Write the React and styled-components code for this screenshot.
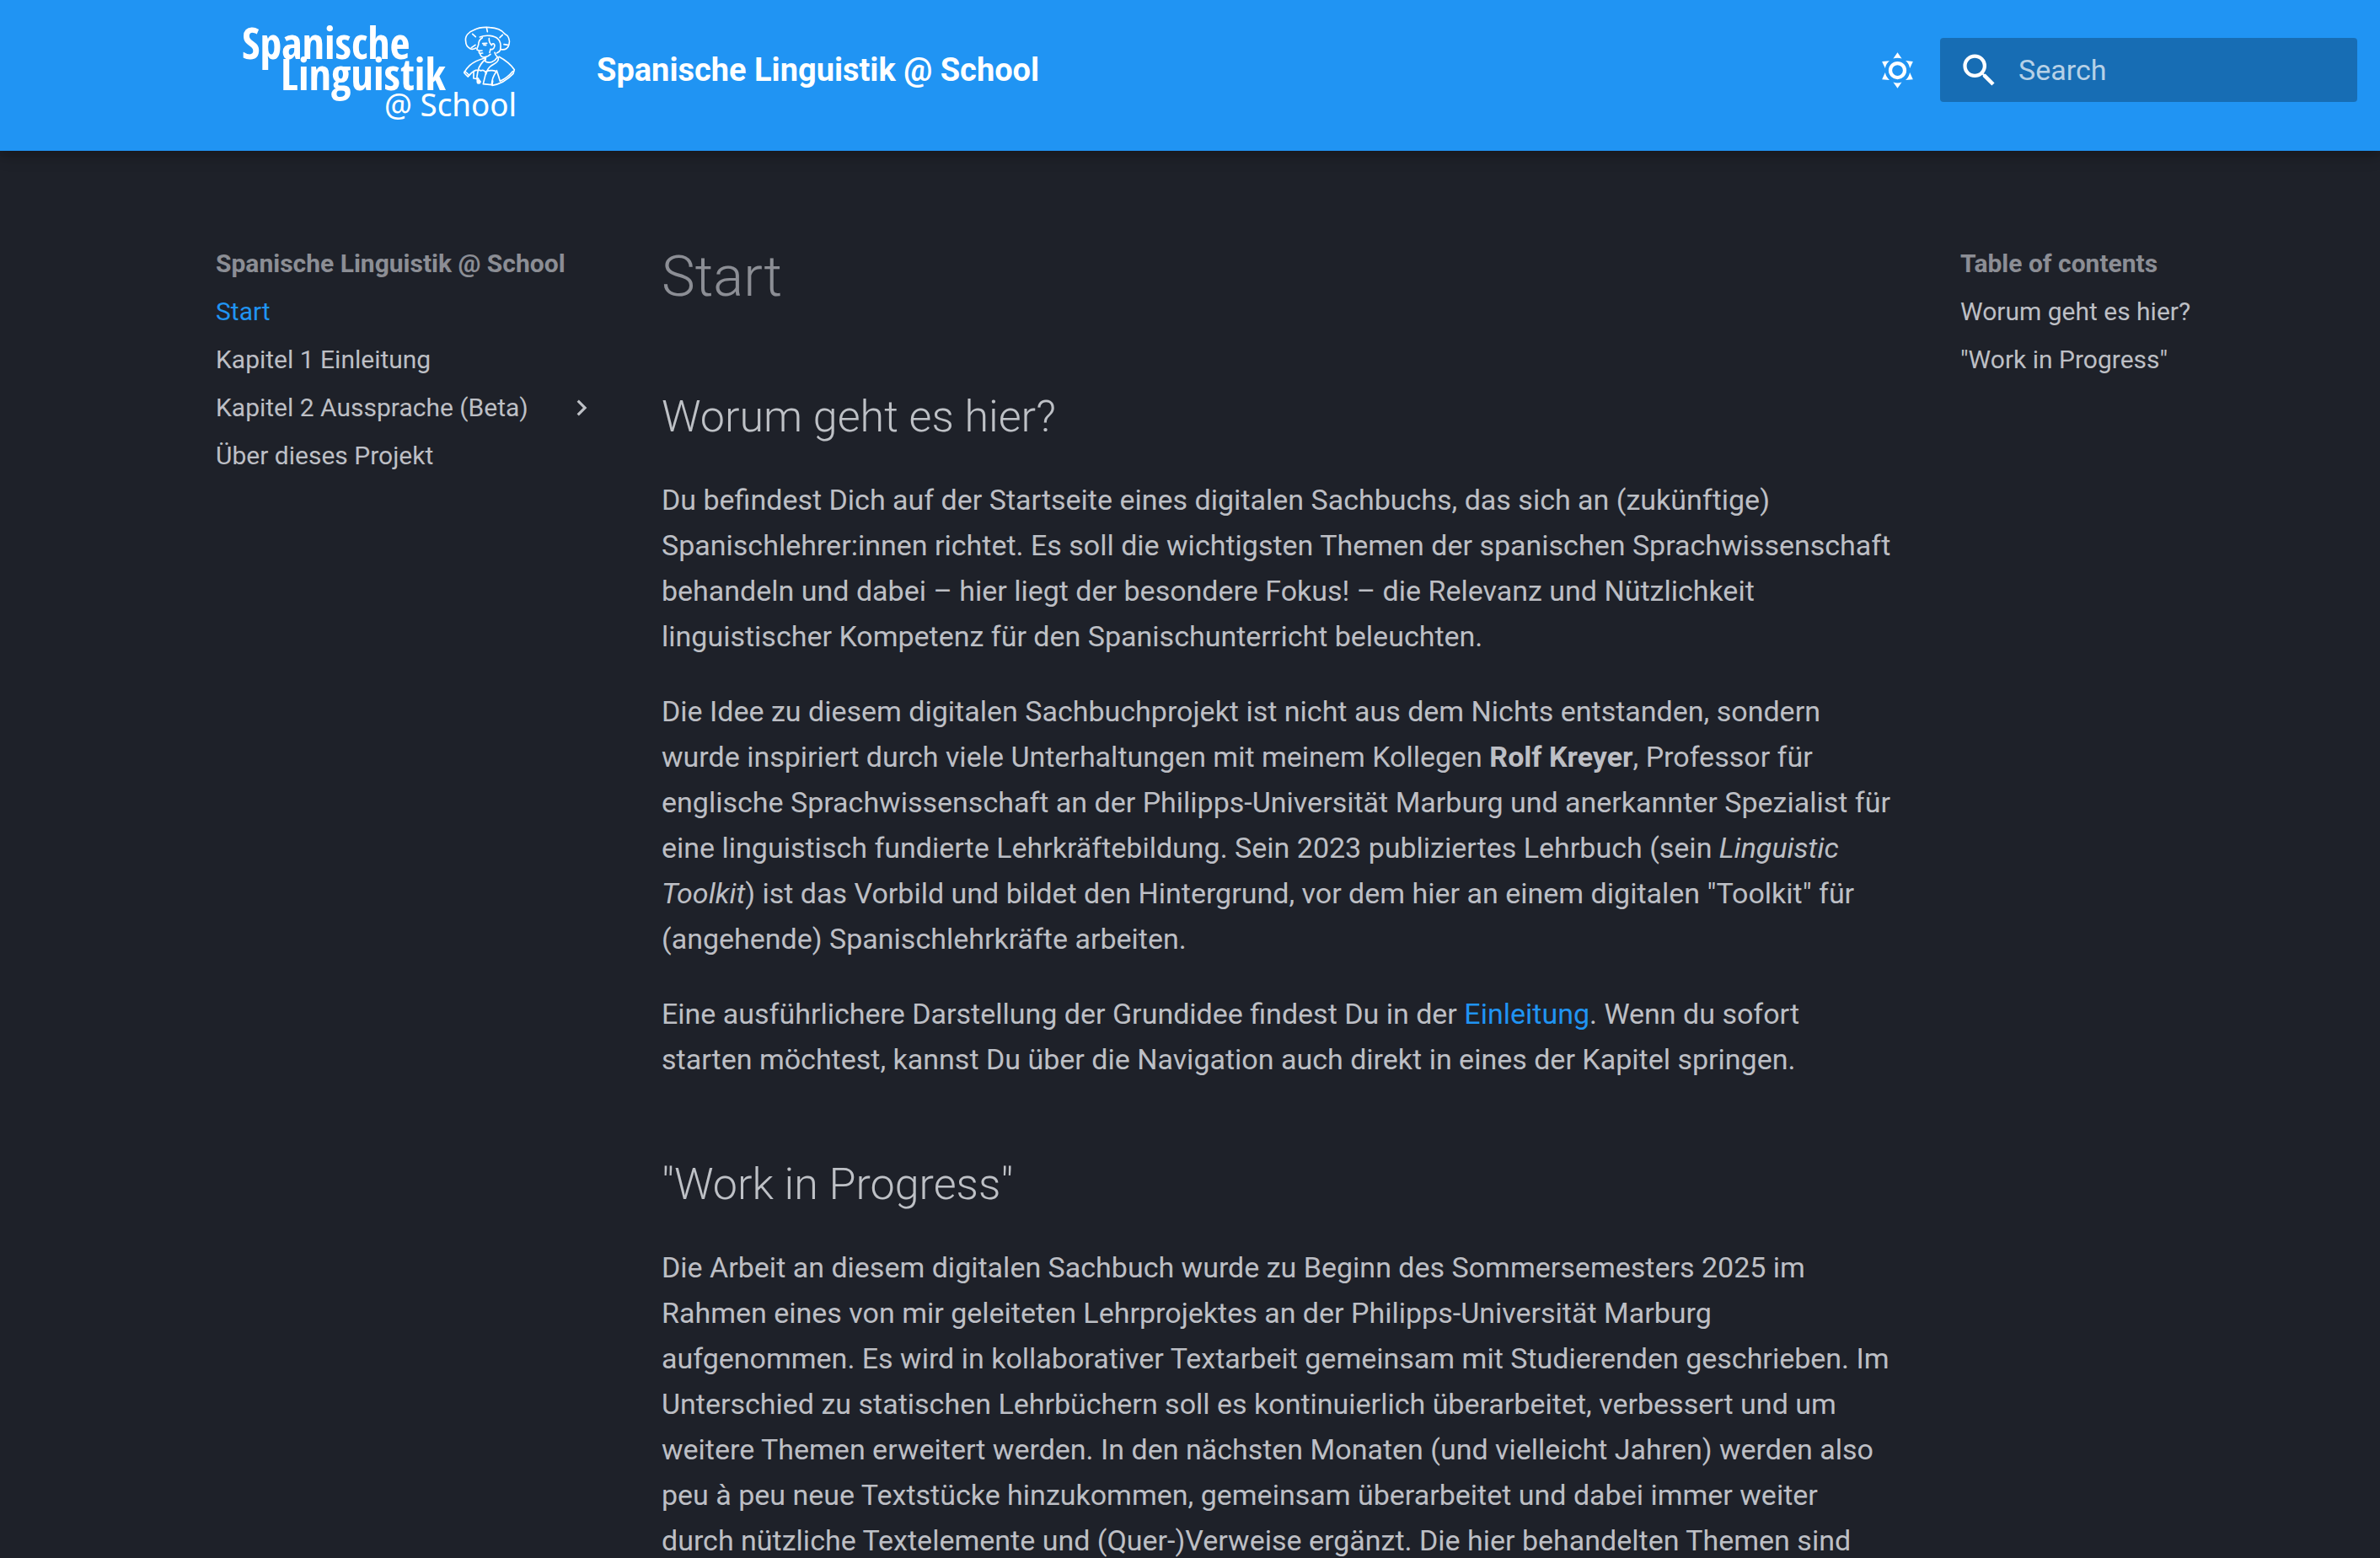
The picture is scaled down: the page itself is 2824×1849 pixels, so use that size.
import React from "react";
import styled, { createGlobalStyle } from "styled-components";

const color = {
  primary: "#2094f3",
  page: "#1e2129",
  text: "rgba(226, 228, 233, 0.82)",
  muted: "rgba(226, 228, 233, 0.56)",
};

const GlobalStyle = createGlobalStyle`
  *, *::before, *::after { box-sizing: border-box; }
  body {
    margin: 0;
    background: ${color.page};
    color: ${color.text};
    font-family: Roboto, "Liberation Sans", sans-serif;
    font-size: 34px;
    -webkit-font-smoothing: antialiased;
  }
  ::-webkit-scrollbar { display: none; }
`;

const Header = styled.header`
  position: sticky;
  top: 0;
  z-index: 1;
  display: flex;
  align-items: center;
  padding: 10px 27px 23px 280px;
  background: ${color.primary};
  color: #fff;
  box-shadow: 0 0 8px rgba(0, 0, 0, 0.1), 0 8px 16px rgba(0, 0, 0, 0.2);
`;

const LogoLink = styled.a`
  display: flex;
  margin-right: 86px;
  color: inherit;
`;

const HeaderTitle = styled.span`
  flex: 1;
  font-size: 38px;
  font-weight: 700;
  line-height: 52px;
`;

const IconButton = styled.button`
  display: flex;
  padding: 8px;
  margin-right: 17px;
  border: 0;
  background: none;
  color: inherit;
  cursor: pointer;
`;

const SearchBox = styled.label`
  display: flex;
  align-items: center;
  gap: 21px;
  width: 495px;
  height: 76px;
  padding: 0 21px;
  border-radius: 4px;
  background: rgba(0, 0, 0, 0.26);
`;

const SearchInput = styled.input`
  flex: 1;
  min-width: 0;
  padding: 0;
  border: 0;
  outline: 0;
  background: none;
  color: #fff;
  font: inherit;
  &::placeholder { color: rgba(255, 255, 255, 0.7); opacity: 1; }
`;

const Glyph = styled.svg`
  flex: none;
  width: ${(p) => p.$size}px;
  height: ${(p) => p.$size}px;
  fill: currentColor;
`;

const Layout = styled.div`
  display: grid;
  grid-template-columns: 453px minmax(0, 1fr) 242px;
  column-gap: 76px;
  align-items: start;
  max-width: 2312px;
  margin: 0 auto;
  padding-top: 105px;
`;

const Nav = styled.nav`
  font-size: 30px;
  line-height: 57px;
  white-space: nowrap;
`;

const NavTitle = styled.div`
  color: ${color.muted};
  font-weight: 700;
`;

const NavList = styled.ul`
  margin: 0;
  padding: 0;
  list-style: none;
`;

const NavLink = styled.a`
  display: flex;
  align-items: center;
  justify-content: space-between;
  color: ${(p) => (p.$active ? color.primary : "inherit")};
  text-decoration: none;
`;

const Article = styled.article`
  padding-right: 6px;
  line-height: 54px;
`;

const PageTitle = styled.h1`
  margin: 0;
  color: ${color.muted};
  font-size: 67px;
  font-weight: 300;
  line-height: 89px;
`;

const SectionTitle = styled.h2`
  margin: 85px 0 34px;
  font-size: 52px;
  font-weight: 300;
  line-height: 74px;
`;

const Paragraph = styled.p`
  margin: 0 0 35px;
`;

const TextLink = styled.a`
  color: ${color.primary};
  text-decoration: none;
`;

const LogoText = styled.text`
  fill: currentColor;
  font-family: ${(p) =>
    p.$light ? '"Noto Sans Display", "Noto Sans"' : '"Open Sans Condensed", "Open Sans"'}, sans-serif;
  font-size: ${(p) => (p.$light ? 39 : 52)}px;
  font-weight: ${(p) => (p.$light ? 400 : 700)};
`;

const Portrait = styled.g`
  fill: none;
  stroke: currentColor;
  stroke-width: 5;
  stroke-linecap: round;
  stroke-linejoin: round;
`;

function Logo() {
  return (
    <svg width="342" height="146" viewBox="-6 -10 342 146" role="img" aria-label="Spanische Linguistik @ School">
      <LogoText x="1" y="50">Spanische</LogoText>
      <LogoText x="47" y="87">Linguistik</LogoText>
      <LogoText $light x="170" y="118">@ School</LogoText>
      <Portrait transform="translate(262 8) scale(0.3333)">
        <path d="M50 87 C43 91 37 93 30 89 C22 85 14 78 14 64 C10 45 24 29 42 23 C60 14 82 12 100 14 C122 15 142 23 152 36 C166 43 172 58 168 74 C166 88 154 94 140 92" />
        <path d="M88 14 L91 29 M38 37 L49 47 M145 40 L135 50 M34 86 L48 76 M150 74 L164 76" />
        <path d="M64 48 C86 39 116 42 129 55 C139 64 139 82 137 94 C134 101 129 103 124 105" />
        <path d="M73 50 C63 56 59 65 59 76 C57 83 52 90 54 93 L62 97 C60 102 62 106 65 107 C66 116 73 122 84 119 C91 118 97 114 102 109" />
        <path d="M74 71 L89 70 M78 76 L86 77 M63 97 L72 96 M66 106 L74 105" />
        <path d="M97 53 C96 65 101 72 106 77 C109 67 119 72 116 82 C114 90 107 94 102 91 M102 91 L99 103" />
        <path d="M86 119 C83 126 82 132 85 136 C99 142 116 137 127 119 M117 103 C119 114 127 118 130 123 C133 139 112 143 103 151 C93 158 89 169 86 180" />
        <path d="M82 123 C62 128 40 138 28 149 C18 158 13 166 8 175 C12 180 16 184 22 189 C29 180 38 171 50 166 L65 166" />
        <path d="M132 118 C149 127 171 142 187 164 L183 178 C163 199 139 215 108 220 L110 204" />
        <path d="M124 167 C128 178 132 190 136 205 C151 198 167 187 181 170 M10 170 C18 175 22 179 26 184" />
        <path d="M85 126 C70 139 61 150 58 167 C55 180 51 188 55 204 M42 170 C43 180 41 189 42 195 L52 196" />
        <path d="M67 168 C76 164 85 168 85 178 L76 215 L105 218 M84 171 C101 164 118 167 123 171 C113 184 107 199 106 218" />
        <circle cx="60" cy="208" r="5" fill="currentColor" />
        <path d="M57 194 L66 207" />
      </Portrait>
    </svg>
  );
}

function Icon({ size, path }) {
  return (
    <Glyph $size={size} viewBox="0 0 24 24" aria-hidden="true">
      <path d={path} />
    </Glyph>
  );
}

const icons = {
  sun: "M12 7a5 5 0 0 1 5 5 5 5 0 0 1-5 5 5 5 0 0 1-5-5 5 5 0 0 1 5-5m0 2a3 3 0 0 0-3 3 3 3 0 0 0 3 3 3 3 0 0 0 3-3 3 3 0 0 0-3-3m0-7 2.39 3.42C13.65 5.15 12.84 5 12 5s-1.65.15-2.39.42zM3.34 7l4.16-.35A7.2 7.2 0 0 0 5.94 8.5c-.44.74-.69 1.5-.83 2.29zm.02 10 1.76-3.77a7.131 7.131 0 0 0 2.38 4.14zM20.65 7l-1.77 3.79a7.02 7.02 0 0 0-2.38-4.15zm-.01 10-4.14.36c.59-.51 1.12-1.14 1.54-1.86.42-.73.69-1.5.83-2.29zM12 22l-2.41-3.44c.74.27 1.55.44 2.41.44.82 0 1.63-.17 2.37-.44z",
  magnify: "M9.5 3A6.5 6.5 0 0 1 16 9.5c0 1.61-.59 3.09-1.56 4.23l.27.27h.79l5 5-1.5 1.5-5-5v-.79l-.27-.27A6.516 6.516 0 0 1 9.5 16 6.5 6.5 0 0 1 3 9.5 6.5 6.5 0 0 1 9.5 3m0 2C7 5 5 7 5 9.5S7 14 9.5 14 14 12 14 9.5 12 5 9.5 5",
  chevron: "M8.59 16.58 13.17 12 8.59 7.41 10 6l6 6-6 6z",
};

const chapters = [
  { label: "Start", active: true },
  { label: "Kapitel 1 Einleitung" },
  { label: "Kapitel 2 Aussprache (Beta)", nested: true },
  { label: "Über dieses Projekt" },
];

const sections = [
  { label: "Worum geht es hier?", id: "worum" },
  { label: '"Work in Progress"', id: "work-in-progress" },
];

export default function App() {
  return (
    <>
      <GlobalStyle />
      <Header>
        <LogoLink href="#">
          <Logo />
        </LogoLink>
        <HeaderTitle>Spanische Linguistik @ School</HeaderTitle>
        <IconButton type="button" aria-label="Switch colour scheme">
          <Icon size={51} path={icons.sun} />
        </IconButton>
        <SearchBox>
          <Icon size={51} path={icons.magnify} />
          <SearchInput type="text" placeholder="Search" aria-label="Search" />
        </SearchBox>
      </Header>
      <Layout>
        <Nav aria-label="Navigation">
          <NavTitle>Spanische Linguistik @ School</NavTitle>
          <NavList>
            {chapters.map((c) => (
              <li key={c.label}>
                <NavLink href="#" $active={c.active}>
                  {c.label}
                  {c.nested && <Icon size={38} path={icons.chevron} />}
                </NavLink>
              </li>
            ))}
          </NavList>
        </Nav>
        <Article lang="de">
          <PageTitle>Start</PageTitle>
          <SectionTitle id="worum">Worum geht es hier?</SectionTitle>
          <Paragraph>
            Du befindest Dich auf der Startseite eines digitalen Sachbuchs, das sich an (zukünftige)
            Spanischlehrer:innen richtet. Es soll die wichtigsten Themen der spanischen
            Sprachwissenschaft behandeln und dabei – hier liegt der besondere Fokus! – die Relevanz
            und Nützlichkeit linguistischer Kompetenz für den Spanischunterricht beleuchten.
          </Paragraph>
          <Paragraph>
            Die Idee zu diesem digitalen Sachbuchprojekt ist nicht aus dem Nichts entstanden, sondern
            wurde inspiriert durch viele Unterhaltungen mit meinem Kollegen{" "}
            <strong>Rolf Kreyer</strong>, Professor für englische Sprachwissenschaft an der
            Philipps-Universität Marburg und anerkannter Spezialist für eine linguistisch fundierte
            Lehrkräftebildung. Sein 2023 publiziertes Lehrbuch (sein <em>Linguistic Toolkit</em>) ist
            das Vorbild und bildet den Hintergrund, vor dem hier an einem digitalen "Toolkit" für
            (angehende) Spanischlehrkräfte arbeiten.
          </Paragraph>
          <Paragraph>
            Eine ausführlichere Darstellung der Grundidee findest Du in der{" "}
            <TextLink href="#">Einleitung</TextLink>. Wenn du sofort starten möchtest, kannst Du über
            die Navigation auch direkt in eines der Kapitel springen.
          </Paragraph>
          <SectionTitle id="work-in-progress">"Work in Progress"</SectionTitle>
          <Paragraph>
            Die Arbeit an diesem digitalen Sachbuch wurde zu Beginn des Sommersemesters 2025 im
            Rahmen eines von mir geleiteten Lehrprojektes an der Philipps-Universität Marburg
            aufgenommen. Es wird in kollaborativer Textarbeit gemeinsam mit Studierenden geschrieben.
            Im Unterschied zu statischen Lehrbüchern soll es kontinuierlich überarbeitet, verbessert
            und um weitere Themen erweitert werden. In den nächsten Monaten (und vielleicht Jahren)
            werden also peu à peu neue Textstücke hinzukommen, gemeinsam überarbeitet und dabei immer
            weiter durch nützliche Textelemente und (Quer-)Verweise ergänzt. Die hier behandelten
            Themen sind
          </Paragraph>
        </Article>
        <Nav aria-label="Table of contents">
          <NavTitle>Table of contents</NavTitle>
          <NavList>
            {sections.map((s) => (
              <li key={s.id}>
                <NavLink href={`#${s.id}`}>{s.label}</NavLink>
              </li>
            ))}
          </NavList>
        </Nav>
      </Layout>
    </>
  );
}
